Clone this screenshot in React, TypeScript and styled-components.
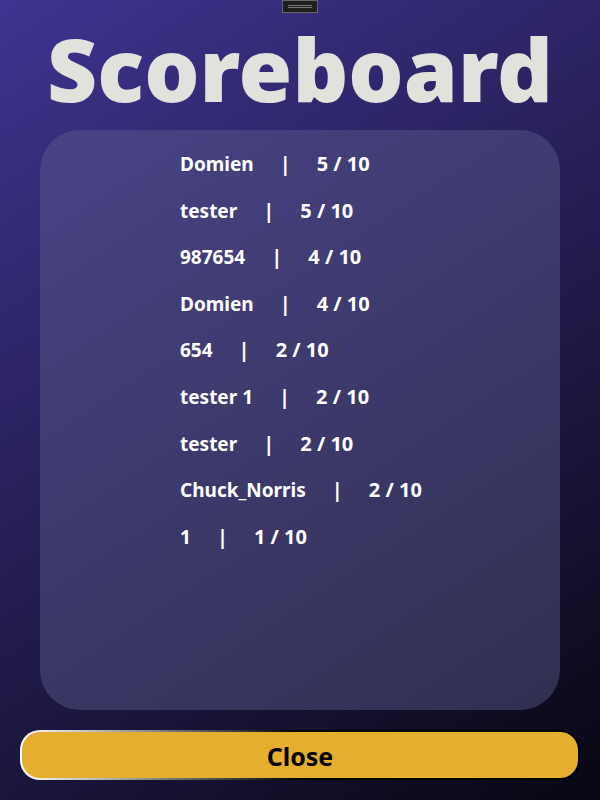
import React from "react";
import styled, { createGlobalStyle } from "styled-components";

const GlobalStyle = createGlobalStyle`
  * { box-sizing: border-box; }
  body {
    margin: 0;
    font-family: "Segoe UI", "Noto Sans", "Open Sans", sans-serif;
  }
`;

const Window = styled.main`
  position: relative;
  display: flex;
  flex-direction: column;
  min-height: 100vh;
  padding: 8px 20px 20px;
  background: linear-gradient(147deg, #3f3490, #080612);
`;

const Handle = styled.div`
  position: absolute;
  top: 0;
  left: 50%;
  transform: translateX(-50%);
  display: flex;
  flex-direction: column;
  justify-content: center;
  gap: 1px;
  width: 36px;
  height: 13px;
  padding: 0 5px;
  border: 1px solid #666;
  background: #1f1f1f;
`;

const Grip = styled.span`
  height: 1px;
  background: #777;
`;

const Title = styled.h1`
  margin: 0 0 2px;
  color: #e1e2dc;
  font-size: 87px;
  font-weight: 900;
  line-height: 120px;
  text-align: center;
  white-space: nowrap;
`;

const Panel = styled.section`
  flex: 1;
  margin: 0 20px 20px;
  padding: 21px 40px 20px 140px;
  border-radius: 40px;
  background: rgba(94, 93, 141, 0.45);
`;

const ScoreList = styled.ol`
  display: flex;
  flex-direction: column;
  gap: 20px;
  margin: 0;
  padding: 0;
  list-style: none;
`;

const ScoreRow = styled.li`
  display: flex;
  align-items: baseline;
  gap: 26px;
  color: #fff;
  font-size: 20px;
  font-weight: 700;
  line-height: 1.33;
  white-space: nowrap;
`;

const PlayerName = styled.span`
  font-size: 19px;
`;

const CloseButton = styled.button`
  height: 50px;
  padding: 2px 0 0;
  border: 2px solid transparent;
  border-radius: 20px;
  background:
    linear-gradient(#e6ae2e, #e6ae2e) padding-box,
    linear-gradient(to right, #fff, #000 50%) border-box;
  color: #000;
  font: inherit;
  font-size: 25px;
  font-weight: 700;
  cursor: pointer;
`;

const scores = [
  { name: "Domien", score: 5 },
  { name: "tester", score: 5 },
  { name: "987654", score: 4 },
  { name: "Domien", score: 4 },
  { name: "654", score: 2 },
  { name: "tester 1", score: 2 },
  { name: "tester", score: 2 },
  { name: "Chuck_Norris", score: 2 },
  { name: "1", score: 1 },
];

export default function App() {
  return (
    <>
      <GlobalStyle />
      <Window>
        <Handle>
          <Grip />
          <Grip />
        </Handle>
        <Title>Scoreboard</Title>
        <Panel>
          <ScoreList>
            {scores.map(({ name, score }, index) => (
              <ScoreRow key={index}>
                <PlayerName>{name}</PlayerName>
                <span>|</span>
                <span>{score} / 10</span>
              </ScoreRow>
            ))}
          </ScoreList>
        </Panel>
        <CloseButton type="button">Close</CloseButton>
      </Window>
    </>
  );
}
